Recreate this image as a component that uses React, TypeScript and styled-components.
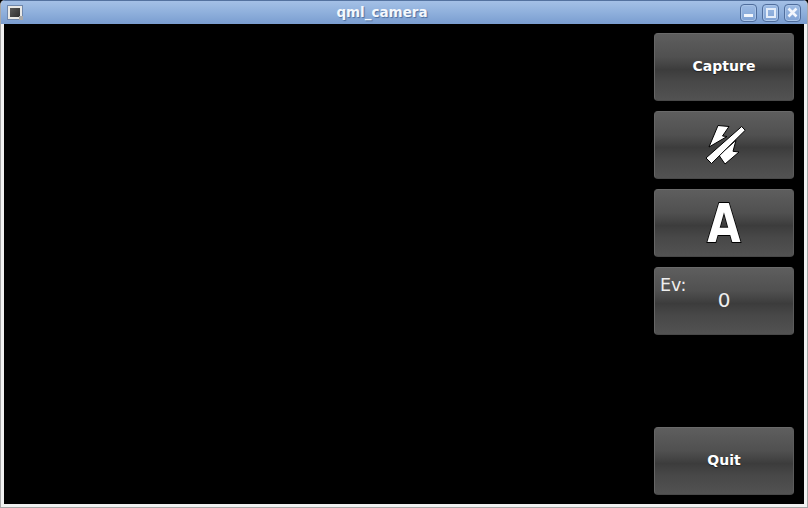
import React from 'react';
import styled, { createGlobalStyle } from 'styled-components';

const GlobalStyle = createGlobalStyle`
  html, body {
    margin: 0;
    padding: 0;
    width: 808px;
    height: 508px;
    overflow: hidden;
    background: #000;
    font-family: "DejaVu Sans", sans-serif;
  }
`;

const Window = styled.div`
  width: 808px;
  height: 508px;
  display: flex;
  flex-direction: column;
  box-sizing: border-box;
  background: #f1f1f1;
  border: 1px solid #a8a8a8;
  border-top: none;
  border-radius: 5px 5px 0 0;
  overflow: hidden;
`;

const TitleBar = styled.div`
  height: 24px;
  flex: none;
  box-sizing: border-box;
  display: flex;
  align-items: center;
  padding: 0 6px 0 7px;
  border-top: 1px solid #54729f;
  background: linear-gradient(#a4c0e6, #8fb0dc 50%, #7a9dd0);
`;

const Title = styled.div`
  flex: 1;
  text-align: center;
  font-size: 13.5px;
  line-height: 17px;
  font-weight: 700;
  color: #f4f8fd;
  text-shadow: 1px 1px 1px #4f6f9f;
  margin: -1px 0 0 2px;
`;

const AppIcon = styled.div`
  position: relative;
  width: 14px;
  height: 13px;
  box-sizing: border-box;
  border: 2px solid #e8e8e6;
  outline: 1px solid #6f87ab;
  background: linear-gradient(135deg, #5a5a5a, #2e2e2e);
  margin-top: -1px;
`;

const AppIconCorner = styled.span`
  position: absolute;
  right: -3px;
  bottom: -3px;
  width: 4px;
  height: 4px;
  background: #a9a9a9;
`;

const WindowButtons = styled.div`
  display: flex;
  gap: 5px;
`;

const WindowButton = styled.div`
  width: 17px;
  height: 18px;
  box-sizing: border-box;
  display: flex;
  align-items: center;
  justify-content: center;
  border: 1px solid #4f6d9c;
  border-radius: 4px;
  background: linear-gradient(#9dbbe4, #7fa2d4);
  box-shadow: inset 0 0 0 1px #a9c4e8;
`;

const Body = styled.div`
  flex: 1;
  margin: 0 3px 3px 3px;
  background: #000;
  display: flex;
  flex-direction: column;
  align-items: flex-end;
  justify-content: space-between;
  padding: 9px 10px 9px 0;
`;

const ButtonStack = styled.div`
  display: flex;
  flex-direction: column;
  gap: 10px;
`;

const PanelButton = styled.div`
  position: relative;
  width: 140px;
  height: 68px;
  box-sizing: border-box;
  display: flex;
  align-items: center;
  justify-content: center;
  border-radius: 4px;
  border: 1px solid #484848;
  border-top-color: #6a6a6a;
  border-left-color: #666;
  border-right-color: #5c5c5c;
  background: linear-gradient(#5e5e5e, #505050 35%, #3c3c3c 54%, #484848 72%, #525252);
  color: #fff;
`;

const ButtonLabel = styled.span`
  font-size: 14px;
  font-weight: 700;
  margin-top: -3px;
  text-shadow: 0 1px 1px #222;
`;

const AutoLabel = styled.span`
  font-size: 54px;
  line-height: 54px;
  font-weight: 700;
  color: #fff;
  -webkit-text-stroke: 2px #000;
  paint-order: stroke fill;
  transform: scaleX(0.8);
  margin-top: 2px;
`;

const EvCaption = styled.span`
  position: absolute;
  left: 5px;
  top: 6px;
  font-size: 17.5px;
  line-height: 22px;
  color: #eee;
`;

const EvValue = styled.span`
  font-size: 20px;
  line-height: 24px;
  color: #eee;
  margin-top: -2px;
`;

const App: React.FC = () => (
  <>
    <GlobalStyle />
    <Window>
      <TitleBar>
        <AppIcon>
          <AppIconCorner />
        </AppIcon>
        <Title>qml_camera</Title>
        <WindowButtons>
          <WindowButton>
            <svg width="9" height="9" viewBox="0 0 9 9">
              <rect x="0" y="6" width="9" height="3" fill="#f2f6fc" />
            </svg>
          </WindowButton>
          <WindowButton>
            <svg width="10" height="10" viewBox="0 0 10 10">
              <rect x="1" y="1" width="8" height="8" fill="none" stroke="#e4edf9" strokeWidth="2" />
            </svg>
          </WindowButton>
          <WindowButton>
            <svg width="11" height="11" viewBox="0 0 11 11">
              <path d="M1.5 1.5 L9.5 9.5 M9.5 1.5 L1.5 9.5" stroke="#f2f6fc" strokeWidth="2.6" />
            </svg>
          </WindowButton>
        </WindowButtons>
      </TitleBar>
      <Body>
        <ButtonStack>
          <PanelButton>
            <ButtonLabel>Capture</ButtonLabel>
          </PanelButton>
          <PanelButton>
            <svg width="44" height="42" viewBox="0 0 44 42">
              <path
                d="M16 1.5 L27 2.5 L20.5 12 L25 12.5 L7 23 Z M34 16.3 L31 27.3 L37 28 L23 40 L17 31.3 Z"
                fill="#fff"
                stroke="#000"
                strokeWidth="1"
              />
              <path d="M39.7 2.5 L43.2 6.3 L9.5 39.5 L4 34 Z" fill="#fff" stroke="#000" strokeWidth="1" />
            </svg>
          </PanelButton>
          <PanelButton>
            <AutoLabel>A</AutoLabel>
          </PanelButton>
          <PanelButton>
            <EvCaption>Ev:</EvCaption>
            <EvValue>0</EvValue>
          </PanelButton>
        </ButtonStack>
        <PanelButton>
          <ButtonLabel>Quit</ButtonLabel>
        </PanelButton>
      </Body>
    </Window>
  </>
);

export default App;
